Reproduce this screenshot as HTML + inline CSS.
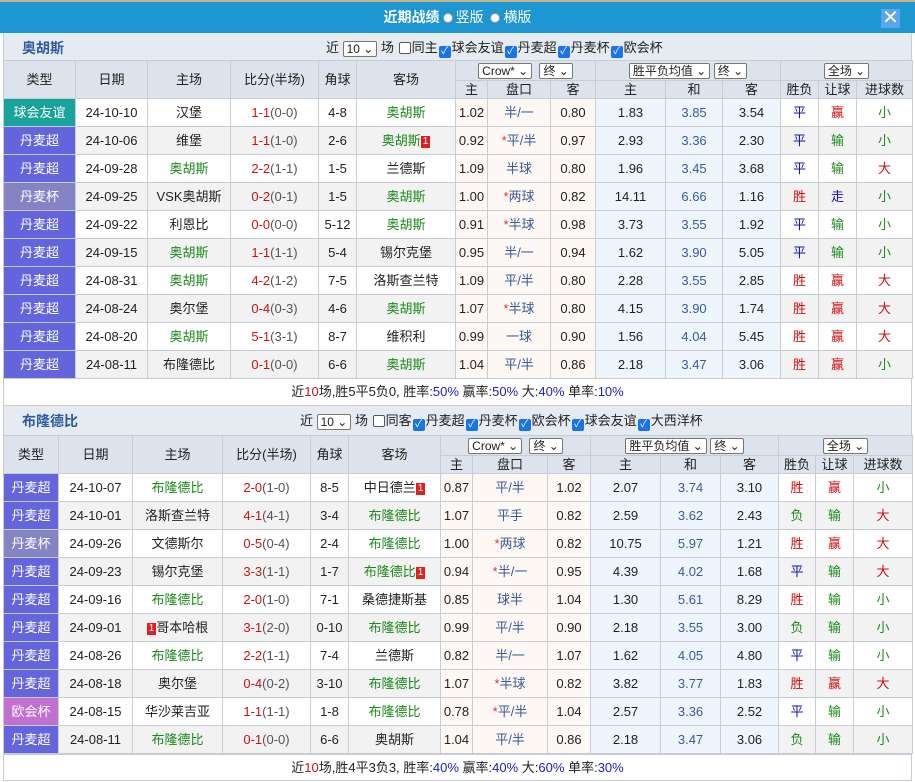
<!DOCTYPE html><html><head><meta charset="utf-8"><style>
*{box-sizing:border-box;margin:0;padding:0}
body{width:915px;height:782px;background:#fff;font:13px "Liberation Sans","Noto Sans CJK SC",sans-serif;color:#222;overflow:hidden;position:relative}
.top{position:absolute;left:0;top:0;width:915px;height:33px;background:#1e96d2;border-top:2px solid #c9b48a;color:#fff;text-align:center;line-height:31px;font-weight:bold;font-size:14px}
.top .r{display:inline-block;width:10px;height:10px;border-radius:50%;background:#fff;border:1px solid #999;vertical-align:-1px;margin:0 3px}
.top span.n{font-weight:normal}
.x{position:absolute;right:15px;top:7px;width:19px;height:19px;background:#5aa6ea;color:#fff;font-size:20px;line-height:18px;text-align:center;font-weight:normal}
.sec{position:absolute;left:3px;width:909px;height:27px;background:#e6ebf1;border-left:1px solid #c8ccd4;border-right:1px solid #c8ccd4}
.sec b{position:absolute;left:18px;top:5px;color:#2f5aa0;font-size:14px}
.sec .f{position:absolute;top:4px;font-size:13px;white-space:nowrap}
.sel{display:inline-block;border:1px solid #777;background:#fff;padding:0 3px;height:16px;line-height:14px;border-radius:2px;font-size:12px;vertical-align:middle}
.cb{display:inline-block;width:12px;height:12px;border:1px solid #555;border-radius:2px;background:#fff;vertical-align:-2px;margin:0 1px}
.cb.on{background:#1a73e8;border-color:#1a73e8;color:#fff;font-size:10px;line-height:10px;text-align:center}
table{position:absolute;left:3px;width:909px;border-collapse:collapse;table-layout:fixed}
td{border:1px solid #c8ccd4;text-align:center;height:28px;padding:0;line-height:16px;white-space:nowrap;overflow:hidden}
tr.h td{background:#dde3ec;height:20px}
tr.h2 td{background:#dde3ec;height:18px}
tr.g td{background:#f2f2f2}
td.a{background:#fdf8f4!important}
td.e{background:#eef5fc!important}
td.t{color:#fff}
.ft{background:#6464dc!important}.bj{background:#8484c4!important}.yy{background:#18a39b!important}.oh{background:#c070d0!important}
.gr{color:#1a8a1a}.rd{color:#d01010}.bl{color:#1010c0}.pk{color:#3a5a9a}.eb{color:#3a5a9a}
.sc .r{color:#d01010}.sc{color:#555}
.st{color:#e03030}
.card{display:inline-block;background:#e02020;color:#fff;font-size:10px;line-height:12px;padding:0 2px;vertical-align:1px}
.sum{position:absolute;left:3px;width:909px;border:1px solid #c8ccd4;background:#fff;text-align:center;line-height:26px}
.sum .r{color:#d01010}.sum .p{color:#2020c0}
</style></head><body>
<div class="top">近期战绩<span class="r"></span><span class="n">竖版 </span><span class="r" style="background:#fff"></span><span class="n">横版</span><div class="x">✕</div></div>

<div class="sec" style="top:33px"><b>奥胡斯</b><span class="f" style="left:322px">近 <span class="sel">10 ⌄</span> 场 <span class="cb"></span>同主<span class="cb on">✓</span>球会友谊<span class="cb on">✓</span>丹麦超<span class="cb on">✓</span>丹麦杯<span class="cb on">✓</span>欧会杯</span></div>
<table style="top:60px">
<colgroup><col style="width:72px"><col style="width:72px"><col style="width:83px"><col style="width:88px"><col style="width:38px"><col style="width:99px"><col style="width:32px"><col style="width:63px"><col style="width:45px"><col style="width:70px"><col style="width:57px"><col style="width:58px"><col style="width:38px"><col style="width:38px"><col style="width:56px"></colgroup>
<tr class="h"><td rowspan="2">类型</td><td rowspan="2">日期</td><td rowspan="2">主场</td><td rowspan="2">比分(半场)</td><td rowspan="2">角球</td><td rowspan="2">客场</td><td colspan="3"><span class="sel">Crow* ⌄</span> &nbsp;<span class="sel">终 ⌄</span></td><td colspan="3"><span class="sel">胜平负均值 ⌄</span> <span class="sel">终 ⌄</span></td><td colspan="3"><span class="sel">全场 ⌄</span></td></tr>
<tr class="h2"><td>主</td><td>盘口</td><td>客</td><td>主</td><td>和</td><td>客</td><td>胜负</td><td>让球</td><td>进球数</td></tr>
<tr><td class="t yy">球会友谊</td><td>24-10-10</td><td>汉堡</td><td class="sc"><span class="r">1-1</span>(0-0)</td><td>4-8</td><td class="gr">奥胡斯</td><td class="a">1.02</td><td class="a pk">半/一</td><td class="a">0.80</td><td class="e">1.83</td><td class="e eb">3.85</td><td class="e">3.54</td><td class="bl">平</td><td class="rd">赢</td><td class="gr">小</td></tr>
<tr class="g"><td class="t ft">丹麦超</td><td>24-10-06</td><td>维堡</td><td class="sc"><span class="r">1-1</span>(1-0)</td><td>2-6</td><td class="gr">奥胡斯<span class="card">1</span></td><td class="a">0.92</td><td class="a pk"><span class="st">*</span>平/半</td><td class="a">0.97</td><td class="e">2.93</td><td class="e eb">3.36</td><td class="e">2.30</td><td class="bl">平</td><td class="gr">输</td><td class="gr">小</td></tr>
<tr><td class="t ft">丹麦超</td><td>24-09-28</td><td class="gr">奥胡斯</td><td class="sc"><span class="r">2-2</span>(1-1)</td><td>1-5</td><td>兰德斯</td><td class="a">1.09</td><td class="a pk">半球</td><td class="a">0.80</td><td class="e">1.96</td><td class="e eb">3.45</td><td class="e">3.68</td><td class="bl">平</td><td class="gr">输</td><td class="rd">大</td></tr>
<tr class="g"><td class="t bj">丹麦杯</td><td>24-09-25</td><td>VSK奥胡斯</td><td class="sc"><span class="r">0-2</span>(0-1)</td><td>1-5</td><td class="gr">奥胡斯</td><td class="a">1.00</td><td class="a pk"><span class="st">*</span>两球</td><td class="a">0.82</td><td class="e">14.11</td><td class="e eb">6.66</td><td class="e">1.16</td><td class="rd">胜</td><td class="bl">走</td><td class="gr">小</td></tr>
<tr><td class="t ft">丹麦超</td><td>24-09-22</td><td>利恩比</td><td class="sc"><span class="r">0-0</span>(0-0)</td><td>5-12</td><td class="gr">奥胡斯</td><td class="a">0.91</td><td class="a pk"><span class="st">*</span>半球</td><td class="a">0.98</td><td class="e">3.73</td><td class="e eb">3.55</td><td class="e">1.92</td><td class="bl">平</td><td class="gr">输</td><td class="gr">小</td></tr>
<tr class="g"><td class="t ft">丹麦超</td><td>24-09-15</td><td class="gr">奥胡斯</td><td class="sc"><span class="r">1-1</span>(1-1)</td><td>5-4</td><td>锡尔克堡</td><td class="a">0.95</td><td class="a pk">半/一</td><td class="a">0.94</td><td class="e">1.62</td><td class="e eb">3.90</td><td class="e">5.05</td><td class="bl">平</td><td class="gr">输</td><td class="gr">小</td></tr>
<tr><td class="t ft">丹麦超</td><td>24-08-31</td><td class="gr">奥胡斯</td><td class="sc"><span class="r">4-2</span>(1-2)</td><td>7-5</td><td>洛斯查兰特</td><td class="a">1.09</td><td class="a pk">平/半</td><td class="a">0.80</td><td class="e">2.28</td><td class="e eb">3.55</td><td class="e">2.85</td><td class="rd">胜</td><td class="rd">赢</td><td class="rd">大</td></tr>
<tr class="g"><td class="t ft">丹麦超</td><td>24-08-24</td><td>奥尔堡</td><td class="sc"><span class="r">0-4</span>(0-3)</td><td>4-6</td><td class="gr">奥胡斯</td><td class="a">1.07</td><td class="a pk"><span class="st">*</span>半球</td><td class="a">0.80</td><td class="e">4.15</td><td class="e eb">3.90</td><td class="e">1.74</td><td class="rd">胜</td><td class="rd">赢</td><td class="rd">大</td></tr>
<tr><td class="t ft">丹麦超</td><td>24-08-20</td><td class="gr">奥胡斯</td><td class="sc"><span class="r">5-1</span>(3-1)</td><td>8-7</td><td>维积利</td><td class="a">0.99</td><td class="a pk">一球</td><td class="a">0.90</td><td class="e">1.56</td><td class="e eb">4.04</td><td class="e">5.45</td><td class="rd">胜</td><td class="rd">赢</td><td class="rd">大</td></tr>
<tr class="g"><td class="t ft">丹麦超</td><td>24-08-11</td><td>布隆德比</td><td class="sc"><span class="r">0-1</span>(0-0)</td><td>6-6</td><td class="gr">奥胡斯</td><td class="a">1.04</td><td class="a pk">平/半</td><td class="a">0.86</td><td class="e">2.18</td><td class="e eb">3.47</td><td class="e">3.06</td><td class="rd">胜</td><td class="rd">赢</td><td class="gr">小</td></tr>
</table>
<div class="sum" style="top:378px;height:28px">近<span class="r">10</span>场,胜5平5负0, 胜率:<span class="p">50%</span> 赢率:<span class="p">50%</span> 大:<span class="p">40%</span> 单率:<span class="p">10%</span></div>

<div class="sec" style="top:406px;height:29px"><b>布隆德比</b><span class="f" style="left:296px">近 <span class="sel">10 ⌄</span> 场 <span class="cb"></span>同客<span class="cb on">✓</span>丹麦超<span class="cb on">✓</span>丹麦杯<span class="cb on">✓</span>欧会杯<span class="cb on">✓</span>球会友谊<span class="cb on">✓</span>大西洋杯</span></div>
<table style="top:435px">
<colgroup><col style="width:55px"><col style="width:74px"><col style="width:90px"><col style="width:88px"><col style="width:38px"><col style="width:92px"><col style="width:32px"><col style="width:75px"><col style="width:43px"><col style="width:70px"><col style="width:60px"><col style="width:58px"><col style="width:37px"><col style="width:38px"><col style="width:59px"></colgroup>
<tr class="h"><td rowspan="2">类型</td><td rowspan="2">日期</td><td rowspan="2">主场</td><td rowspan="2">比分(半场)</td><td rowspan="2">角球</td><td rowspan="2">客场</td><td colspan="3"><span class="sel">Crow* ⌄</span> &nbsp;<span class="sel">终 ⌄</span></td><td colspan="3"><span class="sel">胜平负均值 ⌄</span> <span class="sel">终 ⌄</span></td><td colspan="3"><span class="sel">全场 ⌄</span></td></tr>
<tr class="h2"><td>主</td><td>盘口</td><td>客</td><td>主</td><td>和</td><td>客</td><td>胜负</td><td>让球</td><td>进球数</td></tr>
<tr><td class="t ft">丹麦超</td><td>24-10-07</td><td class="gr">布隆德比</td><td class="sc"><span class="r">2-0</span>(1-0)</td><td>8-5</td><td>中日德兰<span class="card">1</span></td><td class="a">0.87</td><td class="a pk">平/半</td><td class="a">1.02</td><td class="e">2.07</td><td class="e eb">3.74</td><td class="e">3.10</td><td class="rd">胜</td><td class="rd">赢</td><td class="gr">小</td></tr>
<tr class="g"><td class="t ft">丹麦超</td><td>24-10-01</td><td>洛斯查兰特</td><td class="sc"><span class="r">4-1</span>(4-1)</td><td>3-4</td><td class="gr">布隆德比</td><td class="a">1.07</td><td class="a pk">平手</td><td class="a">0.82</td><td class="e">2.59</td><td class="e eb">3.62</td><td class="e">2.43</td><td class="gr">负</td><td class="gr">输</td><td class="rd">大</td></tr>
<tr><td class="t bj">丹麦杯</td><td>24-09-26</td><td>文德斯尔</td><td class="sc"><span class="r">0-5</span>(0-4)</td><td>2-4</td><td class="gr">布隆德比</td><td class="a">1.00</td><td class="a pk"><span class="st">*</span>两球</td><td class="a">0.82</td><td class="e">10.75</td><td class="e eb">5.97</td><td class="e">1.21</td><td class="rd">胜</td><td class="rd">赢</td><td class="rd">大</td></tr>
<tr class="g"><td class="t ft">丹麦超</td><td>24-09-23</td><td>锡尔克堡</td><td class="sc"><span class="r">3-3</span>(1-1)</td><td>1-7</td><td class="gr">布隆德比<span class="card">1</span></td><td class="a">0.94</td><td class="a pk"><span class="st">*</span>半/一</td><td class="a">0.95</td><td class="e">4.39</td><td class="e eb">4.02</td><td class="e">1.68</td><td class="bl">平</td><td class="gr">输</td><td class="rd">大</td></tr>
<tr><td class="t ft">丹麦超</td><td>24-09-16</td><td class="gr">布隆德比</td><td class="sc"><span class="r">2-0</span>(1-0)</td><td>7-1</td><td>桑德捷斯基</td><td class="a">0.85</td><td class="a pk">球半</td><td class="a">1.04</td><td class="e">1.30</td><td class="e eb">5.61</td><td class="e">8.29</td><td class="rd">胜</td><td class="gr">输</td><td class="gr">小</td></tr>
<tr class="g"><td class="t ft">丹麦超</td><td>24-09-01</td><td><span class="card">1</span>哥本哈根</td><td class="sc"><span class="r">3-1</span>(2-0)</td><td>0-10</td><td class="gr">布隆德比</td><td class="a">0.99</td><td class="a pk">平/半</td><td class="a">0.90</td><td class="e">2.18</td><td class="e eb">3.55</td><td class="e">3.00</td><td class="gr">负</td><td class="gr">输</td><td class="gr">小</td></tr>
<tr><td class="t ft">丹麦超</td><td>24-08-26</td><td class="gr">布隆德比</td><td class="sc"><span class="r">2-2</span>(1-1)</td><td>7-4</td><td>兰德斯</td><td class="a">0.82</td><td class="a pk">半/一</td><td class="a">1.07</td><td class="e">1.62</td><td class="e eb">4.05</td><td class="e">4.80</td><td class="bl">平</td><td class="gr">输</td><td class="gr">小</td></tr>
<tr class="g"><td class="t ft">丹麦超</td><td>24-08-18</td><td>奥尔堡</td><td class="sc"><span class="r">0-4</span>(0-2)</td><td>3-10</td><td class="gr">布隆德比</td><td class="a">1.07</td><td class="a pk"><span class="st">*</span>半球</td><td class="a">0.82</td><td class="e">3.82</td><td class="e eb">3.77</td><td class="e">1.83</td><td class="rd">胜</td><td class="rd">赢</td><td class="rd">大</td></tr>
<tr><td class="t oh">欧会杯</td><td>24-08-15</td><td>华沙莱吉亚</td><td class="sc"><span class="r">1-1</span>(1-1)</td><td>1-8</td><td class="gr">布隆德比</td><td class="a">0.78</td><td class="a pk"><span class="st">*</span>平/半</td><td class="a">1.04</td><td class="e">2.57</td><td class="e eb">3.36</td><td class="e">2.52</td><td class="bl">平</td><td class="gr">输</td><td class="gr">小</td></tr>
<tr class="g"><td class="t ft">丹麦超</td><td>24-08-11</td><td class="gr">布隆德比</td><td class="sc"><span class="r">0-1</span>(0-0)</td><td>6-6</td><td>奥胡斯</td><td class="a">1.04</td><td class="a pk">平/半</td><td class="a">0.86</td><td class="e">2.18</td><td class="e eb">3.47</td><td class="e">3.06</td><td class="gr">负</td><td class="gr">输</td><td class="gr">小</td></tr>
</table>
<div class="sum" style="top:754px;height:27px">近<span class="r">10</span>场,胜4平3负3, 胜率:<span class="p">40%</span> 赢率:<span class="p">40%</span> 大:<span class="p">60%</span> 单率:<span class="p">30%</span></div>
</body></html>
